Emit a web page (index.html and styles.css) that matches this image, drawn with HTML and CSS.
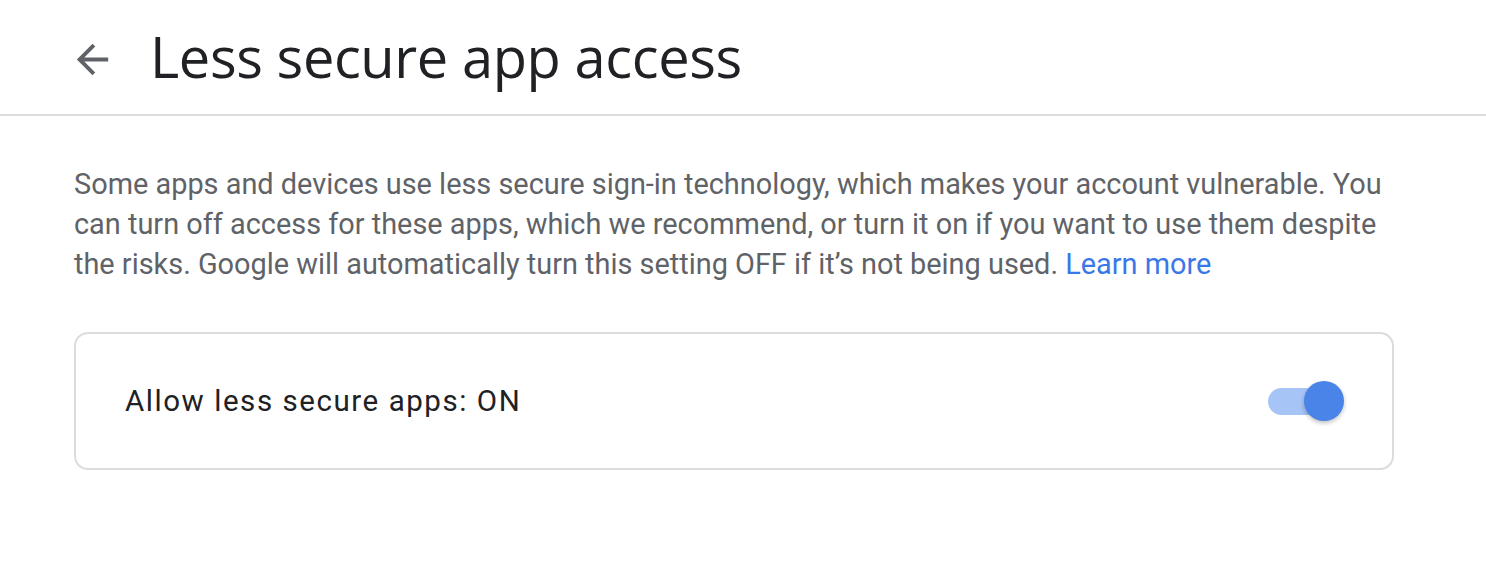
FILE: index.html
```html
<!DOCTYPE html>
<html>
<head>
<meta charset="utf-8">
<link rel="stylesheet" href="styles.css">
</head>
<body>
<header class="topbar">
  <button class="back" aria-label="Back">
    <svg width="47" height="47" viewBox="0 0 24 24"><path d="M20 11H7.83l5.59-5.59L12 4l-8 8 8 8 1.41-1.41L7.83 13H20v-2z" fill="#5f6368"/></svg>
  </button>
  <h1 class="title">Less secure app access</h1>
</header>
<main class="content">
  <p class="desc">Some apps and devices use less secure sign-in technology, which makes your account vulnerable. You can turn off access for these apps, which we recommend, or turn it on if you want to use them despite the risks. Google will automatically turn this setting OFF if it’s not being used. <a class="link" href="#">Learn more</a></p>
  <div class="card">
    <span class="label">Allow less secure apps: ON</span>
    <span class="toggle"><span class="track"></span><span class="thumb"></span></span>
  </div>
</main>
</body>
</html>
```
FILE: styles.css
```css
html, body { margin: 0; padding: 0; background: #fff; }
body { font-family: Roboto, "Noto Sans", sans-serif; }
.topbar {
  display: flex;
  align-items: center;
  padding-left: 69px;
  border-bottom: 2px solid #dadce0;
  box-sizing: border-box;
  height: 116px;
}
.back {
  border: 0; background: none; padding: 0; margin: 0 34px 0 0;
  width: 47px; height: 47px; display: flex; align-items: center; justify-content: center;
  margin-top: 4px;
}
.title {
  margin: 0;
  font-family: "Open Sans", Roboto, sans-serif;
  font-weight: 400;
  font-size: 56px;
  color: #202124;
  letter-spacing: -0.4px;
  margin-top: -2px;
}
.content { padding: 48px 74px 0 74px; width: 1320px; }
.desc {
  margin: 0;
  font-size: 28.9px;
  line-height: 40px;
  color: #5f6368;
}
.link { color: #3b78e7; text-decoration: none; }
.card {
  margin-top: 48px;
  border: 2px solid #dadce0;
  border-radius: 14px;
  height: 138px;
  box-sizing: border-box;
  display: flex;
  align-items: center;
  justify-content: space-between;
  padding: 0 48px 0 49px;
}
.label { font-size: 29.5px; color: #202124; letter-spacing: 1.55px; }
.toggle { position: relative; width: 76px; height: 40px; display: block; }
.track {
  position: absolute; left: 0; top: 7px; width: 70px; height: 27px;
  border-radius: 14px; background: #a6c4f6;
}
.thumb {
  position: absolute; right: 0; top: 0; width: 40px; height: 40px; border-radius: 50%;
  background: #4a84e8; box-shadow: 0 2px 4px rgba(0,0,0,0.25);
}
```
